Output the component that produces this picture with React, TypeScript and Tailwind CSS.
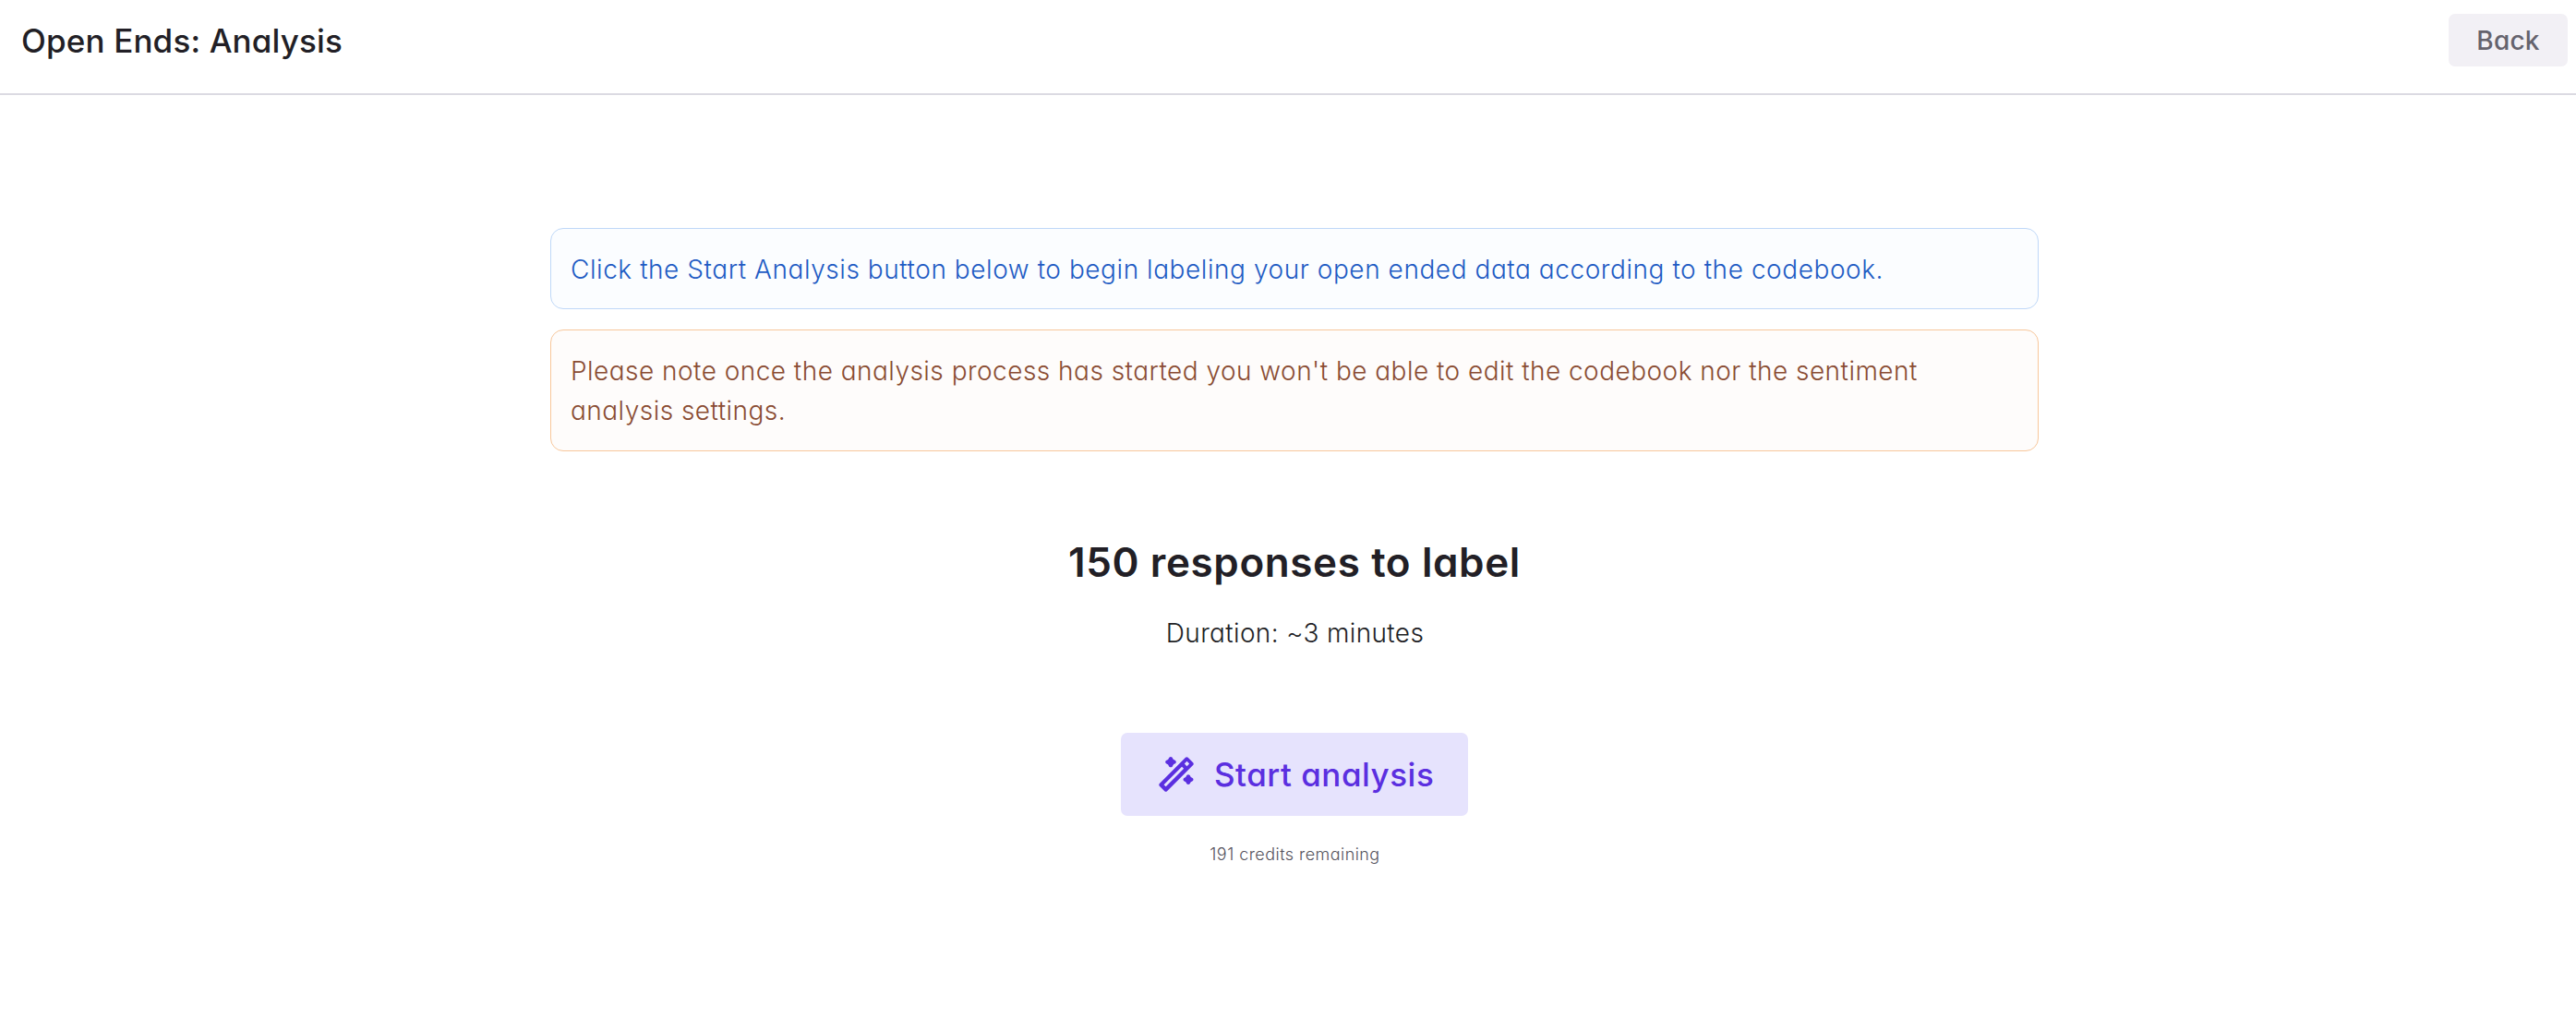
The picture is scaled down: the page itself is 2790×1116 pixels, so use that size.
// ─── Icons ─────────────────────────────────────────────────────────────────────

function MagicWandIcon() {
  return (
    <svg className="h-[38px] w-[38px] shrink-0" viewBox="0 0 114 114" fill="currentColor">
      {/* wand body with the tip window and the long slot cut out */}
      <path
        fillRule="evenodd"
        d="M87 2.500Q91 -1 95 2.500L111.500 19Q115 23 111.500 27L27 111.500Q23 115 19 111.500L2.500 95Q-1 91 2.500 87ZM91.500 14.500L83.500 22.500L91.500 30.500L99.500 22.500ZM75 32L16.500 90.500L23 97L81.500 38.500Z"
      />
      {/* sparkles */}
      <path d="M34 2Q39 -2 44 2Q46 10 54 12Q59 17 54 22Q46 24 44 32Q39 36 34 32Q32 24 24 22Q19 17 24 12Q32 10 34 2Z" />
      <path d="M91 60Q96 56 101 60Q103 67 110 69Q115 74 110 79Q103 81 101 88Q96 92 91 88Q89 81 82 79Q77 74 82 69Q89 67 91 60Z" />
    </svg>
  );
}

// ─── Main Page ─────────────────────────────────────────────────────────────────

export default function App() {
  return (
    <div className="min-h-screen bg-white font-['Inter',sans-serif] text-[#221f26] [font-feature-settings:'cv11']">

      {/* Page header */}
      <header className="flex h-[103px] items-start justify-between border-b-2 border-[#dbdae2] pt-[15px] pr-[9px] pl-[23px]">
        <h1 className="pt-px text-[35px] leading-[57px] font-medium tracking-[0.15px]">Open Ends: Analysis</h1>
        <button className="h-[57px] w-[129px] rounded-[7px] bg-[#f2f0f5] text-[28px] font-medium tracking-[0.2px] text-[#65636d]">
          Back
        </button>
      </header>

      <main className="flex flex-col items-center pt-[144px] pl-[14px]">

        {/* Notices */}
        <div className="flex w-[1612px] flex-col gap-[22px] text-[28px] leading-[43px] font-light">
          <p className="rounded-[14px] border border-[#bfd8f8] bg-[#fbfdff] px-[21px] pt-[23px] pb-5 tracking-[0.56px] text-[#1f5cc4]">
            Click the Start Analysis button below to begin labeling your open ended data according to the codebook.
          </p>
          <p className="rounded-[14px] border border-[#f8c79b] bg-[#fefcfb] px-[21px] pt-[23px] pb-[21px] tracking-[0.47px] text-[#8a4c33]">
            Please note once the analysis process has started you won't be able to edit the codebook nor the sentiment
            analysis settings.
          </p>
        </div>

        {/* Job summary */}
        <h2 className="mt-[92px] text-[44px] leading-[56px] font-semibold tracking-[0.6px]">150 responses to label</h2>
        <p className="mt-7 pl-px text-[28px] leading-[42px] font-light tracking-[0.35px]">Duration: ~3 minutes</p>

        <button className="mt-[87px] flex h-[90px] w-[376px] items-center gap-[22px] rounded-[7px] bg-[#e6e3fd] pl-[41px] text-[#5b2fe0]">
          <MagicWandIcon />
          <span className="text-[35px] font-medium tracking-[0.5px] whitespace-nowrap">Start analysis</span>
        </button>
        <p className="mt-7 pl-px text-[18px] leading-7 font-light tracking-[0.45px] text-[#55535d]">191 credits remaining</p>

      </main>
    </div>
  );
}
